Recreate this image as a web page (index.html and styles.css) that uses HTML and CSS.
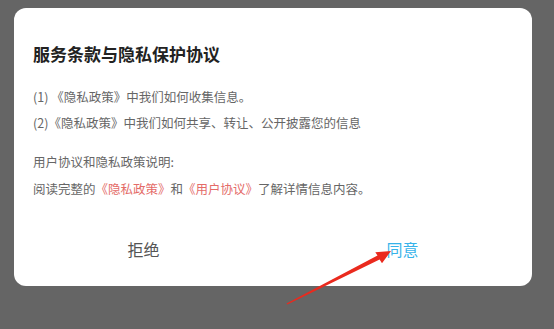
FILE: index.html
```html
<!DOCTYPE html>
<html lang="zh-CN">
<head>
<meta charset="utf-8">
<link rel="stylesheet" href="styles.css">
</head>
<body>
<div class="dialog">
  <h1 class="title">服务条款与隐私保护协议</h1>
  <div class="content">
    <p class="line l1">(1) 《隐私政策》中我们如何收集信息。</p>
    <p class="line">(2)《隐私政策》中我们如何共享、转让、公开披露您的信息</p>
    <p class="line gap">用户协议和隐私政策说明:</p>
    <p class="line last">阅读完整的<span class="link">《隐私政策》</span>和<span class="link">《用户协议》</span>了解详情信息内容。</p>
  </div>
  <div class="actions">
    <div class="btn reject">拒绝</div>
    <div class="btn agree">同意</div>
  </div>
</div>
<svg class="arrow" width="554" height="329" viewBox="0 0 554 329">
  <polygon points="286.6,303.4 287.3,304.4 379.6,259.4 382,263.2 391,251 375.3,252.2 377.5,255.6" fill="#ea2a1e"/>
</svg>
</body>
</html>
```
FILE: styles.css
```css
html, body {
  margin: 0;
  padding: 0;
}
body {
  width: 554px;
  height: 329px;
  background: #656565;
  overflow: hidden;
  position: relative;
  font-family: "Noto Sans CJK SC", "Noto Sans", sans-serif;
}
.dialog {
  margin: 8px 0 0 14px;
  width: 518px;
  height: 278px;
  background: #ffffff;
  border-radius: 12px;
  display: flex;
  flex-direction: column;
  box-sizing: border-box;
  padding-top: 34px;
}
.title {
  margin: 0;
  padding-left: 19px;
  font-size: 17px;
  line-height: 24px;
  font-weight: 700;
  color: #222222;
}
.content {
  margin-top: 18px;
  padding-left: 19px;
}
.line {
  margin: 0;
  font-size: 12.5px;
  line-height: 26px;
  color: #666666;
  white-space: nowrap;
}
.line.gap {
  margin-top: 13px;
}
.line.last {
  margin-top: 1px;
}
.link {
  color: #e46b68;
}
.actions {
  margin-top: 23px;
  display: flex;
  height: 48px;
}
.btn {
  flex: 1;
  display: flex;
  align-items: center;
  justify-content: center;
  font-size: 16px;
}
.reject {
  color: #555555;
}
.agree {
  color: #36b3ea;
}
.arrow {
  position: absolute;
  left: 0;
  top: 0;
}
```
